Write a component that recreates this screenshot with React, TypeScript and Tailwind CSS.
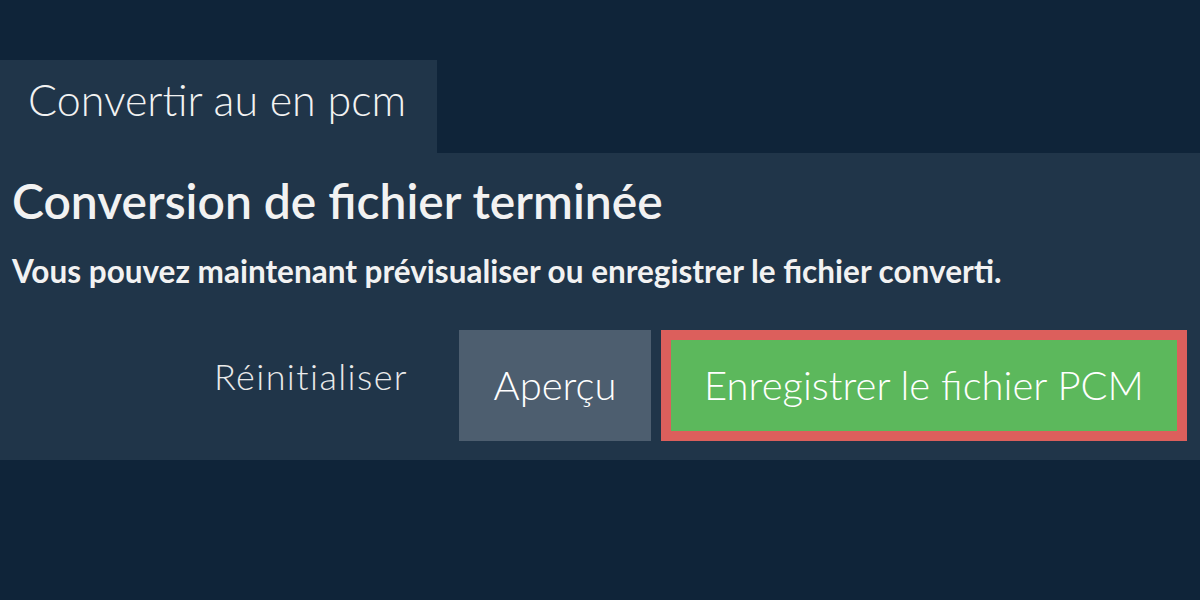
const ZW = '\u200C'

export default function App() {
  return (
    <div className="w-[1200px] h-[600px] bg-[#0f2439] font-['Lato',sans-serif] text-[#f2f2f2] pt-[60px]">
      {/* onglet */}
      <div className="w-[437px] h-[93px] bg-[#203549] pl-[28px] pt-[18px]">
        <span className="block text-[43px] font-light leading-none">{`Conver${ZW}tir au en pcm`}</span>
      </div>

      <div className="bg-[#203549] h-[307px] px-[12px] pt-[24px]">
        <h1 className="text-[48px] font-semibold leading-none">Conversion de fichier terminée</h1>
        <p className="text-[31.5px] font-bold leading-none mt-[31px]">
          {`Vous pouvez maintenant prévisualiser ou enregistrer le fichier conver${ZW}ti.`}
        </p>

        <div className="flex justify-end items-start mt-[42px] pr-[1px]">
          <div className="pt-[28px] mr-[51px]">
            <a className="block text-[36px] font-light leading-none tracking-[1.4px] text-[#eaeaea] cursor-pointer">
              {`Réini${ZW}tialiser`}
            </a>
          </div>
          <button className="h-[111px] w-[192px] mr-[10px] bg-[#4d5e6f] text-[40px] font-light leading-none text-white">
            Aperçu
          </button>
          <button className="h-[111px] w-[526px] border-[10px] border-[#dc5f5c] bg-[#5cb85c] text-[40px] font-light leading-none text-white">
            Enregistrer le fichier PCM
          </button>
        </div>
      </div>
    </div>
  )
}
